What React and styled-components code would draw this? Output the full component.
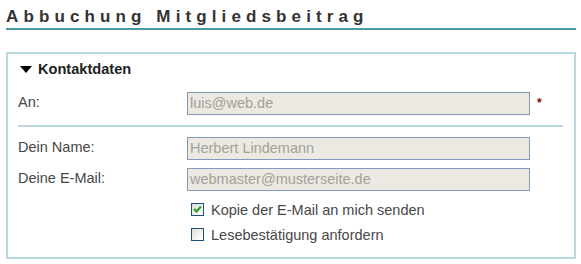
import React from "react";
import styled, { createGlobalStyle } from "styled-components";

const Global = createGlobalStyle`
  html, body { margin: 0; padding: 0; background: #fff; }
  body { font-family: "Liberation Sans", Arial, sans-serif; color: #444; }
`;

const Page = styled.div`
  width: 570px;
  padding-left: 6px;
`;

const Title = styled.h1`
  margin: 0;
  box-sizing: border-box;
  height: 30px;
  padding-top: 7px;
  font-size: 17px;
  line-height: 20px;
  font-weight: bold;
  letter-spacing: 5.12px;
  color: #333;
  border-bottom: 2px solid #4a9a9e;
`;

const Box = styled.section`
  margin-top: 22px;
  border: 2px solid #b9d8e0;
  padding: 0 10px 10px 10px;
  height: 207px;
  box-sizing: border-box;
`;

const Legend = styled.div`
  display: flex;
  align-items: center;
  gap: 6px;
  height: 30px;
  padding-left: 2px;
  font-size: 14.6px;
  font-weight: bold;
  color: #222;
`;

const Row = styled.div`
  display: flex;
  align-items: center;
  height: 23px;
  margin-top: ${(p) => p.$mt}px;
`;

const Label = styled.div`
  width: 169px;
  font-size: 14.5px;
  color: #474747;
  padding-bottom: 4px;
`;

const Input = styled.div`
  width: 343px;
  height: 23px;
  box-sizing: border-box;
  border: 1px solid #7f9db9;
  background: #ebe9e2;
  color: #a3a199;
  font-size: 14.5px;
  line-height: 21px;
  padding-left: 2px;
`;

const Required = styled.span`
  margin-left: 7px;
  color: #8b0000;
  font-size: 12px;
  font-weight: bold;
  align-self: flex-start;
  margin-top: 4px;
`;

const Separator = styled.hr`
  margin: 10px 0 0 0;
  border: 0;
  height: 2px;
  width: 545px;
  background: #b9d8e0;
`;

const Checks = styled.div`
  margin-top: 6px;
  padding-left: 173px;
`;

const CheckRow = styled.label`
  display: flex;
  align-items: center;
  gap: 7px;
  height: 25px;
  font-size: 14.5px;
  color: #474747;
`;

const Box13 = styled.span`
  width: 11px;
  height: 11px;
  border: 1px solid #1c5180;
  background: linear-gradient(135deg, #dcdcd7 0%, #f4f4f0 60%, #ffffff 100%);
  display: inline-flex;
  align-items: center;
  justify-content: center;
`;

const Triangle = () => (
  <svg width="12" height="7" viewBox="0 0 12 7">
    <polygon points="0,0 12,0 6,7" fill="#000" />
  </svg>
);

const Check = () => (
  <svg width="9" height="9" viewBox="0 0 9 9">
    <path d="M1 4 L3.5 6.5 L8 1.5" stroke="#21a121" strokeWidth="2" fill="none" />
  </svg>
);

const Checkbox = ({ checked, children }) => (
  <CheckRow>
    <Box13>{checked && <Check />}</Box13>
    {children}
  </CheckRow>
);

export default function App() {
  return (
    <Page>
      <Global />
      <Title>Abbuchung Mitgliedsbeitrag</Title>
      <Box>
        <Legend>
          <Triangle />
          Kontaktdaten
        </Legend>
        <Row $mt={8}>
          <Label>An:</Label>
          <Input>luis@web.de</Input>
          <Required>*</Required>
        </Row>
        <Separator />
        <Row $mt={10}>
          <Label>Dein Name:</Label>
          <Input>Herbert Lindemann</Input>
        </Row>
        <Row $mt={8}>
          <Label>Deine E-Mail:</Label>
          <Input>webmaster@musterseite.de</Input>
        </Row>
        <Checks>
          <Checkbox checked>Kopie der E-Mail an mich senden</Checkbox>
          <Checkbox>Lesebestätigung anfordern</Checkbox>
        </Checks>
      </Box>
    </Page>
  );
}
